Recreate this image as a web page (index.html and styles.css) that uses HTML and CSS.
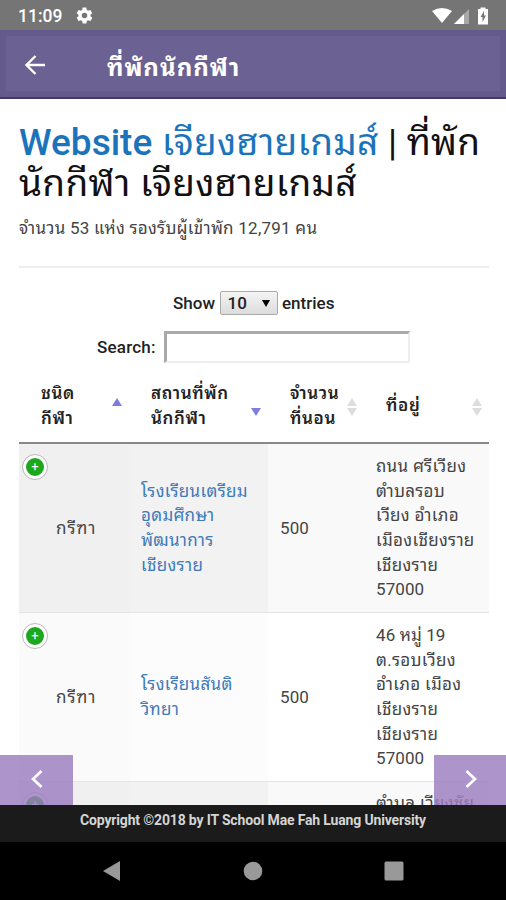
FILE: index.html
```html
<!DOCTYPE html>
<html lang="th">
<head>
  <meta charset="utf-8">
  <title>ที่พักนักกีฬา</title>
  <link rel="stylesheet" href="styles.css">
</head>
<body>
  <div class="status-bar">
    <span class="time">11:09</span>
    <svg class="gear" viewBox="0 0 24 24" width="19" height="19"><path fill="#fff" d="M19.4 13c0-.3.1-.6.1-1s0-.7-.1-1l2.1-1.600c.2-.2.2-.4.100-.600l-2-3.500c-.1-.2-.4-.3-.6-.2l-2.500 1c-.5-.4-1.100-.7-1.700-1l-.4-2.600C14.400 2.200 14.200 2 14 2h-4c-.2 0-.5.2-.5.400l-.4 2.700c-.6.2-1.100.6-1.700 1l-2.500-1c-.2-.1-.5 0-.6.2l-2 3.500c-.1.2-.1.500.1.600L4.500 11c0 .3-.1.600-.1 1s0 .7.1 1l-2.100 1.600c-.2.2-.2.400-.1.600l2 3.500c.1.2.4.3.6.2l2.500-1c.5.4 1.100.7 1.700 1l.4 2.600c0 .300.300.500.500.500h4c.2 0 .5-.2.500-.400l.4-2.700c.6-.2 1.100-.6 1.700-1l2.500 1c.2.100.5 0 .6-.2l2-3.500c.1-.2.1-.5-.1-.600zM12 15.500A3.500 3.500 0 1 1 12 8.500a3.500 3.500 0 0 1 0 7z"/></svg>
    <svg class="status-icons" viewBox="0 0 58 18" width="58" height="18">
      <path d="M0 4Q10 -2 20 4L10 16Z" fill="#fff"/>
      <path d="M22 17L37 2V17Z" fill="#a8a8a8"/>
      <path d="M22 17L32 7V17Z" fill="#fff"/>
      <path d="M46 2H48.500V.5H53.500V2H56V17.500H46Z" fill="#fff"/>
      <path d="M52 4L48.500 10H50.500V15L54 8.500H52Z" fill="#757575"/>
    </svg>
  </div>

  <div class="app-bar">
    <svg class="back" viewBox="0 0 20 20" width="20" height="20"><path d="M20 10H2M10.500 1L1.500 10L10.500 19" fill="none" stroke="#fff" stroke-width="2.300"/></svg>
    <span class="app-title">ที่พักนักกีฬา</span>
  </div>

  <div class="content">
    <h1><a class="site-link"><span class="latin">Website</span> เจียงฮายเกมส์</a> | ที่พัก<br>นักกีฬา เจียงฮายเกมส์</h1>
    <p class="summary">จำนวน 53 แห่ง รองรับผู้เข้าพัก 12,791 คน</p>
    <div class="divider"></div>

    <div class="length">
      Show
      <span class="select">10 <svg viewBox="0 0 8 7" width="8" height="7"><path d="M0 0H8L4 7Z"/></svg></span>
      entries
    </div>
    <div class="filter">
      <label for="search">Search:</label>
      <input id="search" type="text">
    </div>

    <table>
      <colgroup><col class="c1"><col class="c2"><col class="c3"><col class="c4"></colgroup>
      <thead>
        <tr>
          <th><div class="head">ชนิด<br>กีฬา<svg class="sort up" viewBox="0 0 10 8" width="10" height="8"><path d="M5 0L10 8H0Z"/></svg></div></th>
          <th><div class="head">สถานที่พัก<br>นักกีฬา<svg class="sort down" viewBox="0 0 10 8" width="10" height="8"><path d="M0 0H10L5 8Z"/></svg></div></th>
          <th><div class="head">จำนวน<br>ที่นอน<svg class="sort both" viewBox="0 0 10 18" width="10" height="18"><path d="M5 0L10 8H0ZM0 10H10L5 18Z"/></svg></div></th>
          <th><div class="head">ที่อยู่<svg class="sort both" viewBox="0 0 10 18" width="10" height="18"><path d="M5 0L10 8H0ZM0 10H10L5 18Z"/></svg></div></th>
        </tr>
      </thead>
      <tbody>
        <tr class="odd">
          <td><span class="plus">+</span>กรีฑา</td>
          <td><a>โรงเรียนเตรียม<br>อุดมศึกษา<br>พัฒนาการ<br>เชียงราย</a></td>
          <td class="num">500</td>
          <td>ถนน ศรีเวียง<br>ตำบลรอบ<br>เวียง อำเภอ<br>เมืองเชียงราย<br>เชียงราย<br><span class="num">57000</span></td>
        </tr>
        <tr class="even">
          <td><span class="plus">+</span>กรีฑา</td>
          <td><a>โรงเรียนสันติ<br>วิทยา</a></td>
          <td class="num">500</td>
          <td><span class="num">46 หมู่ 19</span><br>ต.รอบเวียง<br>อำเภอ เมือง<br>เชียงราย<br>เชียงราย<br><span class="num">57000</span></td>
        </tr>
        <tr class="odd">
          <td><span class="plus">+</span></td>
          <td></td>
          <td></td>
          <td class="top">ตำบล เวียงชัย</td>
        </tr>
      </tbody>
    </table>

    <div class="pager prev"><svg viewBox="0 0 12 18" width="12" height="18"><path d="M10.500 1L2 9L10.500 17"/></svg></div>
    <div class="pager next"><svg viewBox="0 0 12 18" width="12" height="18"><path d="M1.500 1L10 9L1.500 17"/></svg></div>
  </div>

  <div class="footer">Copyright ©2018 by IT School Mae Fah Luang University</div>

  <div class="nav-bar">
    <svg viewBox="0 0 20 22" width="20" height="22"><path d="M18 1V21L1 11Z"/></svg>
    <svg viewBox="0 0 20 20" width="20" height="20"><circle cx="10" cy="10" r="9.300"/></svg>
    <svg viewBox="0 0 20 20" width="20" height="20"><rect x=".5" y=".5" width="19" height="19" rx="1.500"/></svg>
  </div>
</body>
</html>
```

FILE: styles.css
```css
* {
  box-sizing: border-box;
}
body {
  display: flex;
  flex-direction: column;
  height: 900px;
  margin: 0;
  overflow: hidden;
  background: #fff;
  color: #444;
  font-family: Roboto, "Noto Sans Thai Looped", "Droid Sans Thai", Loma, "Noto Sans Thai", "Noto Sans", sans-serif;
  font-size: 17px;
  white-space: nowrap;
}
svg {
  display: block;
  flex: none;
}
.status-bar {
  display: flex;
  align-items: center;
  height: 30px;
  padding: 1px 16px 0 18px;
  background: #757575;
  color: #fff;
}
.time {
  width: 57px;
  font-size: 17.5px;
  font-weight: 500;
}
.status-icons {
  margin-left: auto;
}
.app-bar {
  display: flex;
  align-items: center;
  height: 69px;
  padding: 2px 0 0 25px;
  background: #6b6192;
  border-bottom: 2px solid #45386f;
  box-shadow: inset 0 0 0 6px #645a8b;
}
.app-title {
  margin-left: 62px;
  color: #fff;
  font-size: 24px;
  font-weight: 700;
  letter-spacing: 1px;
}
.content {
  position: relative;
  height: 706px;
  padding: 23px 17px 0 19px;
  overflow: hidden;
}
h1 {
  height: 82px;
  margin: 0;
  color: #111;
  font-size: 37px;
  font-weight: 400;
  letter-spacing: .25px;
  line-height: 41px;
}
.site-link {
  color: #1b74bb;
}
.latin {
  font-weight: 500;
  letter-spacing: 0;
}
.summary {
  height: 24px;
  margin: 12px 0 26px;
  font-size: 17px;
  letter-spacing: .25px;
  line-height: 24px;
}
.divider {
  height: 2px;
  background: #eee;
}
.length,
.filter {
  display: flex;
  align-items: center;
  color: #222;
  font-weight: 500;
}
.length {
  gap: 4.5px;
  height: 24px;
  margin: 23px 0 0 154px;
}
.select {
  display: flex;
  align-items: center;
  justify-content: space-between;
  width: 58px;
  height: 24px;
  padding: 0 7px;
  border: 1px solid #aaa;
  border-radius: 2px;
  background: linear-gradient(#f4f4f4, #dcdcdc);
}
.filter {
  gap: 8px;
  height: 32px;
  margin: 16px 0 0 78px;
}
.filter label {
  width: 59px;
  letter-spacing: .2px;
}
#search {
  width: 246px;
  height: 32px;
  padding: 0;
  border: 2px solid #eee;
  border-top: 3px solid #aaa;
  border-left: 3px solid #aaa;
}
table {
  width: 470px;
  margin-top: 7px;
  border-collapse: separate;
  border-spacing: 0;
  table-layout: fixed;
}
.c1 { width: 110px; }
.c2 { width: 139px; }
.c3 { width: 96px; }
.c4 { width: 125px; }
th {
  height: 74px;
  padding: 0 0 1px 22px;
  border-bottom: 2px solid #888;
  color: #222;
  font-weight: 600;
  letter-spacing: .6px;
  line-height: 24.5px;
  text-align: left;
}
.head {
  position: relative;
}
.sort {
  position: absolute;
  right: 7px;
  fill: #ddd;
}
.sort.up {
  top: 17px;
  fill: #7d7de0;
}
.sort.down {
  top: 27px;
  fill: #7d7de0;
}
.sort.both {
  top: calc(50% - 8px);
}
td {
  position: relative;
  height: 169px;
  padding: 0 0 0 12px;
  border-bottom: 1px solid #e4e4e4;
  letter-spacing: .3px;
  line-height: 24.6px;
}
.num {
  letter-spacing: .1px;
}
td:first-child {
  padding-left: 37px;
  letter-spacing: 1px;
}
td a {
  color: #3f7ab8;
}
.odd td { background: #f9f9f9; }
.odd td:nth-child(1) { background: #f0f0f0; }
.odd td:nth-child(2) { background: #f2f2f2; }
.even td:nth-child(1) { background: #fafafa; }
.even td:nth-child(2) { background: #fcfcfc; }
td.top {
  padding-top: 9px;
  vertical-align: top;
}
.plus {
  position: absolute;
  top: 11px;
  left: 4px;
  width: 24px;
  height: 24px;
  border: 3px solid #fff;
  border-radius: 50%;
  outline: 1px solid #bbb;
  background: #1ca81c;
  color: #fff;
  font-size: 13px;
  letter-spacing: 0;
  line-height: 18px;
  text-align: center;
}
.pager {
  position: absolute;
  bottom: 0;
  display: flex;
  align-items: center;
  width: 72px;
  height: 50px;
  background: rgba(155, 125, 190, .82);
}
.pager svg {
  margin-top: -2px;
}
.pager path {
  fill: none;
  stroke: #fff;
  stroke-width: 2.7;
}
.prev {
  left: 0;
  width: 73px;
  padding-left: 31px;
}
.next {
  right: 0;
  padding-left: 31px;
}
.footer {
  height: 37px;
  background: #1b1b1b;
  color: #d5d5d5;
  font-size: 14px;
  font-weight: 700;
  letter-spacing: -.16px;
  line-height: 30px;
  text-align: center;
}
.nav-bar {
  display: flex;
  align-items: center;
  justify-content: center;
  gap: 121px;
  height: 58px;
  background: #000;
}
.nav-bar svg {
  fill: #999;
}
```
